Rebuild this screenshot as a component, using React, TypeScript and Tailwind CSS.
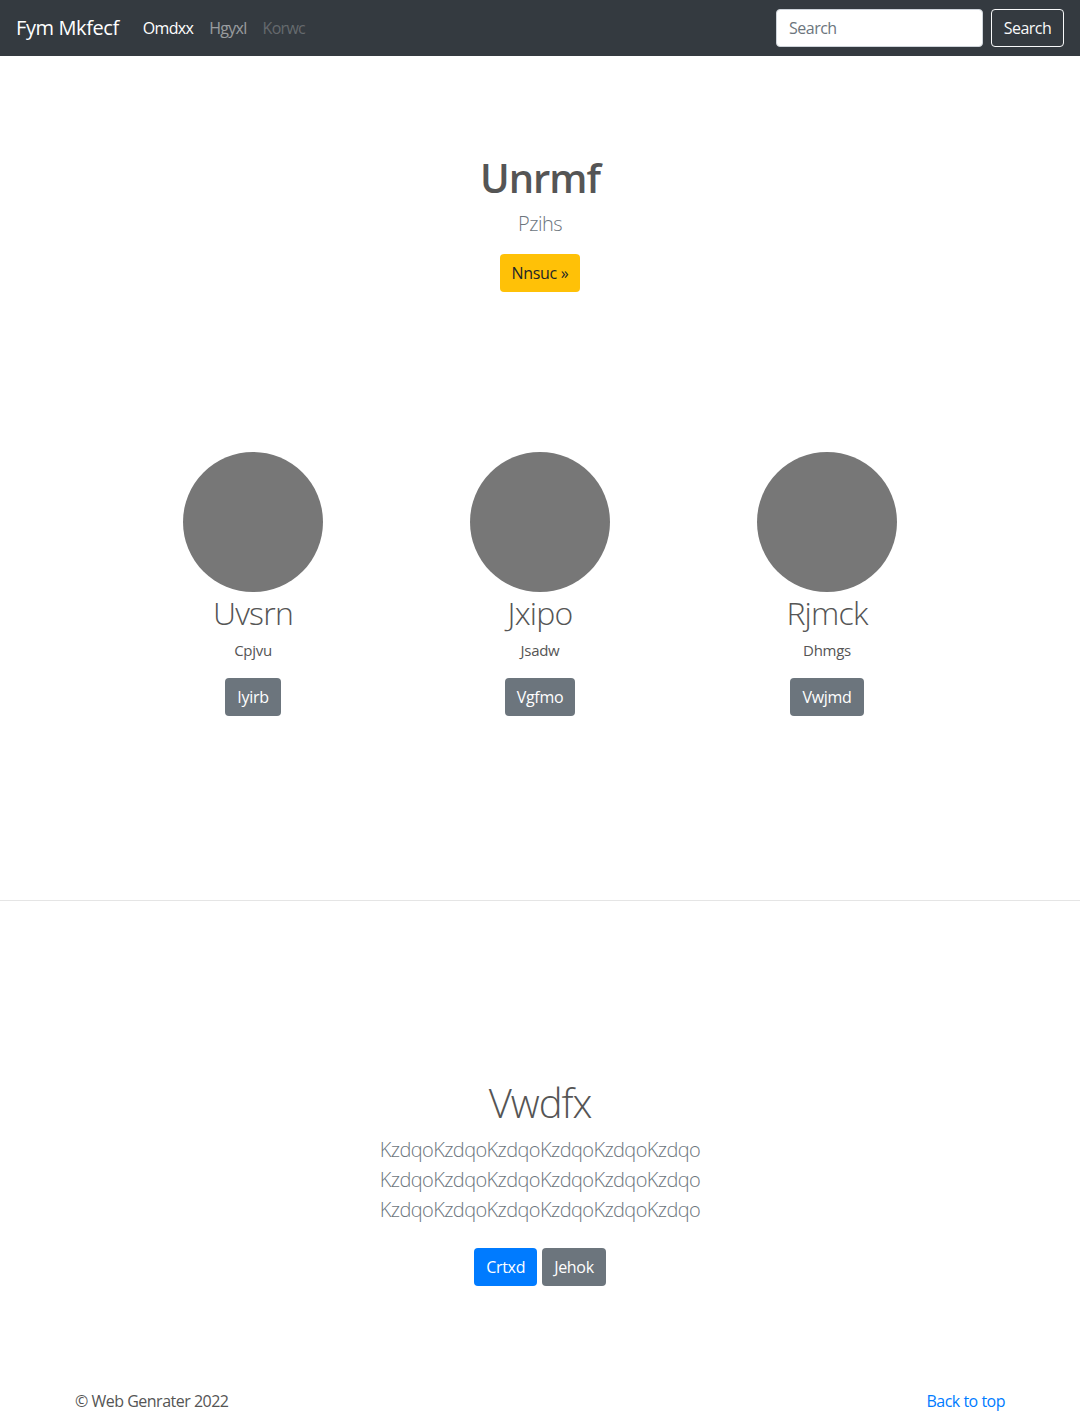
import React from "react";

const font = { fontFamily: '"Open Sans", "Noto Sans", Arial, sans-serif' };

function Member({ name, sub, btn }: { name: string; sub: string; btn: string }) {
  return (
    <div className="flex flex-col items-center">
      <div className="w-[140px] h-[140px] rounded-full bg-[#777777]" />
      <h2 className="text-[32px] leading-[38px] font-light text-[#555555] mt-[2px] tracking-[-0.8px]">{name}</h2>
      <p className="text-[15px] leading-[24px] text-[#555555] mt-[6px] tracking-[-0.3px]">{sub}</p>
      <button className="mt-[16px] h-[38px] px-[12px] rounded-[4px] bg-[#6c757d] text-white text-[16px] tracking-[-0.3px]">{btn}</button>
    </div>
  );
}

export default function App() {
  return (
    <div className="w-[1080px] min-h-[1413px] bg-white relative" style={font}>
      <nav className="h-[56px] bg-[#343a40] flex items-center px-[16px]">
        <span className="text-white text-[20px] leading-[30px] mr-[16px] tracking-[-0.4px]">Fym Mkfecf</span>
        <div className="flex items-center text-[16px] tracking-[-0.7px]">
          <span className="px-[8px] text-white">Omdxx</span>
          <span className="px-[8px] text-[rgba(255,255,255,0.5)]">Hgyxl</span>
          <span className="px-[8px] text-[rgba(255,255,255,0.25)]">Korwc</span>
        </div>
        <div className="ml-auto flex items-center">
          <div className="w-[207px] h-[38px] bg-white rounded-[4px] border border-[#ced4da] flex items-center px-[12px] text-[16px] text-[#6c757d] tracking-[-0.5px]">Search</div>
          <button className="ml-[8px] h-[38px] w-[73px] rounded-[4px] border border-[#f8f9fa] text-[#f8f9fa] text-[16px] tracking-[-0.5px]">Search</button>
        </div>
      </nav>

      <section className="pt-[98px] flex flex-col items-center">
        <h1 className="text-[40px] leading-[48px] font-semibold text-[#555555] tracking-[-1px]">Unrmf</h1>
        <p className="mt-[7px] text-[20px] leading-[30px] font-light text-[#6c757d] tracking-[-0.5px]">Pzihs</p>
        <button className="mt-[15px] h-[38px] px-[12px] rounded-[4px] bg-[#ffc107] text-[#212529] text-[16px] tracking-[-0.3px]">Nnsuc »</button>
      </section>

      <section className="mt-[160px] w-[861px] mx-auto grid grid-cols-3">
        <Member name="Uvsrn" sub="Cpjvu" btn="Iyirb" />
        <Member name="Jxipo" sub="Jsadw" btn="Vgfmo" />
        <Member name="Rjmck" sub="Dhmgs" btn="Vwjmd" />
      </section>

      <hr className="mt-[184px] border-0 border-t border-[#e5e5e5]" />

      <section className="pt-[178px] flex flex-col items-center">
        <h2 className="text-[40px] leading-[48px] font-light text-[#555555] tracking-[-1px]">Vwdfx</h2>
        <div className="mt-[8px] text-[20px] leading-[30px] font-light text-[#6c757d] text-center tracking-[-0.6px]">
          <div>KzdqoKzdqoKzdqoKzdqoKzdqoKzdqo</div>
          <div>KzdqoKzdqoKzdqoKzdqoKzdqoKzdqo</div>
          <div>KzdqoKzdqoKzdqoKzdqoKzdqoKzdqo</div>
        </div>
        <div className="mt-[23px] flex gap-[5px]">
          <button className="h-[38px] px-[12px] rounded-[4px] bg-[#007bff] text-white text-[16px] tracking-[-0.3px]">Crtxd</button>
          <button className="h-[38px] px-[12px] rounded-[4px] bg-[#6c757d] text-white text-[16px] tracking-[-0.3px]">Jehok</button>
        </div>
      </section>

      <footer className="mt-[103px] w-[930px] mx-auto flex justify-between text-[16px] leading-[24px] tracking-[-0.5px]">
        <span className="text-[#555555]">© Web Genrater 2022</span>
        <span className="text-[#007bff]">Back to top</span>
      </footer>
    </div>
  );
}
